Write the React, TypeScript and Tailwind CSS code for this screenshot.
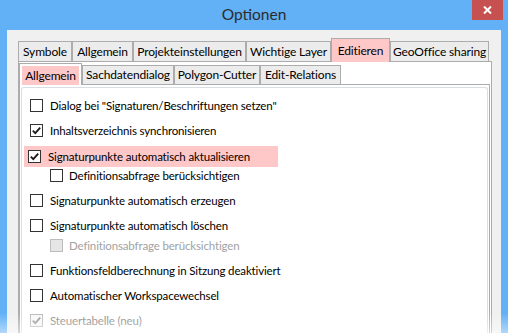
import React from "react";

type Row = {
  label: string;
  checked?: boolean;
  disabled?: boolean;
  indent?: boolean;
  mt: string;
  highlight?: boolean;
};

const outerTabs = [
  { label: "Symbole", w: "w-[54px]" },
  { label: "Allgemein", w: "w-[61px]" },
  { label: "Projekteinstellungen", w: "w-[113px]" },
  { label: "Wichtige Layer", w: "w-[85px]" },
  { label: "Editieren", w: "w-[59px]", active: true },
  { label: "GeoOffice sharing", w: "w-[99px]" },
];

const innerTabs = [
  { label: "Allgemein", w: "w-[63px]", active: true },
  { label: "Sachdatendialog", w: "w-[92px]" },
  { label: "Polygon-Cutter", w: "w-[86px]" },
  { label: "Edit-Relations", w: "w-[81px]" },
];

const rows: Row[] = [
  { label: 'Dialog bei "Signaturen/Beschriftungen setzen"', mt: "mt-0" },
  { label: "Inhaltsverzeichnis synchronisieren", checked: true, mt: "mt-[12px]" },
  { label: "Signaturpunkte automatisch aktualisieren", checked: true, mt: "mt-[9px]", highlight: true },
  { label: "Definitionsabfrage berücksichtigen", indent: true, mt: "mt-[2px]" },
  { label: "Signaturpunkte automatisch erzeugen", mt: "mt-[12px]" },
  { label: "Signaturpunkte automatisch löschen", mt: "mt-[12px]" },
  { label: "Definitionsabfrage berücksichtigen", indent: true, disabled: true, mt: "mt-[7px]" },
  { label: "Funktionsfeldberechnung in Sitzung deaktiviert", mt: "mt-[12px]" },
  { label: "Automatischer Workspacewechsel", mt: "mt-[12px]" },
  { label: "Steuertabelle (neu)", checked: true, disabled: true, mt: "mt-[12px]" },
];

function CheckBox({ checked, disabled }: { checked?: boolean; disabled?: boolean }) {
  return (
    <span
      className={`flex h-[13px] w-[13px] shrink-0 items-center justify-center border ${
        disabled
          ? checked
            ? "border-[#bcbcbc] bg-[#f7f7f7]"
            : "border-[#bcbcbc] bg-[#e6e6e6]"
          : "border-[#333333] bg-white"
      }`}
    >
      {checked && (
        <svg width="11" height="11" viewBox="0 0 11 11">
          <path
            d="M1.8 5.6 L4.3 8.1 L9.2 2.6"
            fill="none"
            stroke={disabled ? "#9a9a9a" : "#1a1a1a"}
            strokeWidth="1.8"
          />
        </svg>
      )}
    </span>
  );
}

export default function App() {
  return (
    <div
      className="relative flex h-[333px] w-[508px] flex-col overflow-hidden bg-[#62b0f6] text-[11.5px] tracking-[-0.15px] text-black"
      style={{ fontFamily: 'Lato, "Noto Sans", sans-serif' }}
    >
      {/* title bar */}
      <div className="relative flex h-[30px] shrink-0 items-center justify-center">
        <span className="text-[15.5px] tracking-normal text-[#2b2b2b]">Optionen</span>
        <div className="absolute right-[5px] top-0 flex h-[20px] w-[31px] items-center justify-center bg-[#c75050]">
          <svg width="9" height="8" viewBox="0 0 9 8">
            <path d="M1 0.5 L8 7.5 M8 0.5 L1 7.5" stroke="#ffffff" strokeWidth="2" />
          </svg>
        </div>
      </div>

      {/* client */}
      <div className="mx-[7px] flex flex-1 flex-col bg-[#f0f0f0] pl-[11px] pr-[9px] pt-[8px]">
        <div className="flex h-[23px] items-end">
          {outerTabs.map((t) =>
            t.active ? (
              <div
                key={t.label}
                className={`${t.w} relative z-10 -mb-px flex h-[24px] items-center justify-center whitespace-nowrap border border-b-0 border-[#acacac] bg-[#ffc8c8] text-[12px]`}
              >
                {t.label}
              </div>
            ) : (
              <div
                key={t.label}
                className={`${t.w} flex h-[20px] items-center justify-center whitespace-nowrap border border-b-0 border-[#acacac] bg-[#ececec] pt-[1px] text-[12px]`}
              >
                {t.label}
              </div>
            )
          )}
        </div>

        <div className="flex flex-1 flex-col border border-b-0 border-[#acacac] bg-white pr-[1px]">
          <div className="flex h-[22px] items-end">
            {innerTabs.map((t) =>
              t.active ? (
                <div
                  key={t.label}
                  className={`${t.w} relative z-10 -mb-px flex h-[22px] border border-b-0 border-[#acacac] bg-white px-[2px] pt-[2px] text-[12px]`}
                >
                  <div className="flex flex-1 items-center justify-center whitespace-nowrap bg-[#ffc8c8]">{t.label}</div>
                </div>
              ) : (
                <div
                  key={t.label}
                  className={`${t.w} flex h-[19px] items-center justify-center whitespace-nowrap border border-b-0 border-[#acacac] bg-[#ececec] text-[12px]`}
                >
                  {t.label}
                </div>
              )
            )}
          </div>

          <div className="flex flex-1 flex-col border border-b-0 border-[#acacac] bg-white px-[1px] pt-[2px]">
            <div className="flex flex-1 flex-col rounded-t-[3px] border border-b-0 border-[#d9dee3] pl-[2px] pt-[11px]">
              {rows.map((r, i) =>
                r.highlight ? (
                  <div
                    key={i}
                    className={`${r.mt} flex w-[254px] items-center bg-[#ffc8c8] pb-[4px] pl-[4px] pt-[4px]`}
                  >
                    <CheckBox checked={r.checked} />
                    <span className="ml-[7px] whitespace-nowrap leading-[13px]">{r.label}</span>
                  </div>
                ) : (
                  <div
                    key={i}
                    className={`${r.mt} flex h-[13px] items-center ${r.indent ? "pl-[26px]" : "pl-[6px]"}`}
                  >
                    <CheckBox checked={r.checked} disabled={r.disabled} />
                    <span
                      className={`${r.indent ? "ml-[6px]" : "ml-[7px]"} whitespace-nowrap leading-[13px] ${
                        r.disabled ? (r.checked ? "text-[#8a8a8a]" : "text-[#a2a2a2]") : ""
                      }`}
                    >
                      {r.label}
                    </span>
                  </div>
                )
              )}
            </div>
          </div>
        </div>
      </div>

      {/* screenshot fade at the bottom edge */}
      <div className="pointer-events-none absolute bottom-0 left-0 h-[20px] w-full bg-gradient-to-b from-transparent to-white/50" />
    </div>
  );
}
